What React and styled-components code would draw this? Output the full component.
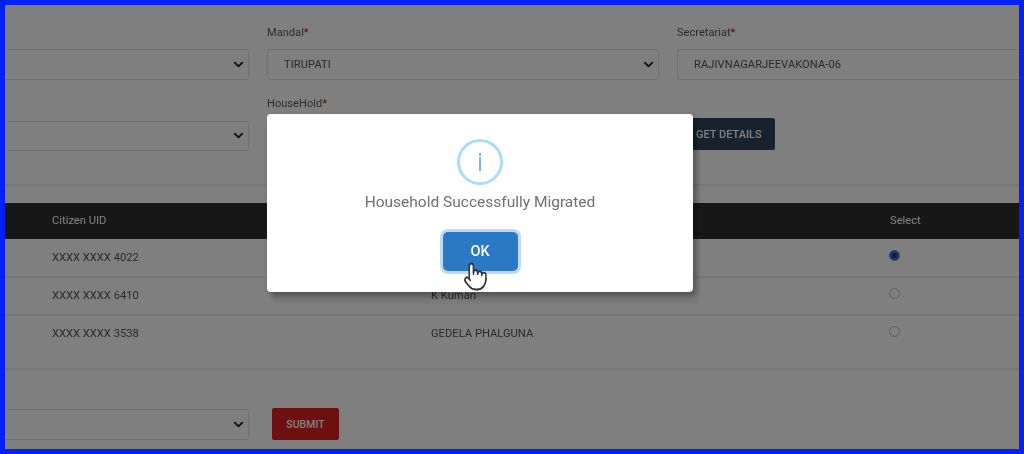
import React from "react";
import styled, { createGlobalStyle } from "styled-components";
import { ChevronDown, Pointer } from "lucide-react";

const Global = createGlobalStyle`
  html, body { margin: 0; padding: 0; background: #fff; }
  body { font-family: Roboto, "Liberation Sans", sans-serif; }
  * { box-sizing: border-box; }
`;

const Frame = styled.div`
  position: relative;
  width: 1024px;
  height: 454px;
  border: 5px solid #0320f5;
  background: #fff;
  overflow: hidden;
  color: #666;
  font-size: 12px;
`;

const PageBody = styled.div`
  filter: blur(0.35px);
`;

const FormGrid = styled.div`
  display: grid;
  grid-template-columns: 244px 392px 1fr;
  grid-template-rows: 54px 54px;
  column-gap: 18px;
  row-gap: 17px;
  padding-top: 21px;
  border-bottom: 2px solid #eee;
  height: 181px;
`;

const Field = styled.div`
  display: flex;
  flex-direction: column;
  min-width: 0;
`;

const Label = styled.label`
  height: ${p => p.$h || 23}px;
  line-height: 13px;
  font-size: 11.1px;
  color: #5a5a5a;
  ${p => p.$spacer && "visibility: hidden;"}
  &::after { content: "*"; color: #c01010; }
`;

const Select = styled.div`
  display: flex;
  align-items: center;
  justify-content: space-between;
  height: 31px;
  padding: 0 2px 0 16px;
  border: 1px solid #e2e2e2;
  border-radius: 3px;
  background: #fff;
  color: #555;
  font-size: 11.1px;
  letter-spacing: 0.1px;
  ${p => p.$clipRight && "border-right: none; border-radius: 3px 0 0 3px;"}
  ${p => p.$clipLeft && "border-left: none; border-radius: 0 3px 3px 0;"}
  svg { color: #222; }
`;

const DetailsButton = styled.button`
  width: 98px;
  height: 32px;
  padding: 0 0 0 19px;
  border: none;
  border-radius: 2px;
  background: #2e445f;
  color: #fff;
  font: 500 11px Roboto, sans-serif;
  text-align: left;
`;

const TableWrap = styled.div`
  margin-top: 17px;
`;

const Row = styled.div`
  display: grid;
  grid-template-columns: 47px 379px 459px 1fr;
  align-items: start;
  height: ${p => p.$h}px;
  padding-top: ${p => p.$top}px;
  border-bottom: 2px solid #eee;
  font-size: 11.2px;
  line-height: 16px;
  color: #555;
`;

const HeadRow = styled(Row)`
  background: #2f2f2f;
  color: #fff;
  border-bottom: none;
`;

const Radio = styled.span`
  display: block;
  width: 11px;
  height: 11px;
  margin-left: -1px;
  border-radius: 50%;
  border: 1.5px solid ${p => (p.$on ? "#5b8fdc" : "#bbb")};
  background: ${p => (p.$on ? "#103a80" : "#fff")};
  ${p => p.$on && "box-shadow: inset 0 0 0 2px #2a72e0;"}
`;

const Bottom = styled.div`
  display: grid;
  grid-template-columns: 244px auto;
  column-gap: 23px;
  margin-top: 39px;
  align-items: start;
  justify-content: start;
`;

const SubmitButton = styled.button`
  width: 67px;
  height: 32px;
  margin-top: -1px;
  border: none;
  border-radius: 2px;
  background: #dc2020;
  color: #fff;
  font: 500 10.5px Roboto, sans-serif;
`;

const Overlay = styled.div`
  position: absolute;
  inset: 0;
  background: rgba(0, 0, 0, 0.5);
`;

const Modal = styled.div`
  position: absolute;
  left: 262px;
  top: 109px;
  width: 426px;
  height: 178px;
  display: flex;
  flex-direction: column;
  align-items: center;
  padding-top: 25px;
  background: #fff;
  border-radius: 4px;
  box-shadow: 3px 4px 6px rgba(0, 0, 0, 0.35), 6px 12px 0 rgba(0, 0, 0, 0.04);
`;

const InfoIcon = styled.svg`
  width: 46px;
  height: 46px;
  display: block;
`;

const Message = styled.div`
  margin-top: 7px;
  font-size: 15.5px;
  line-height: 20px;
  color: #707070;
`;

const OkButton = styled.button`
  margin-top: 20px;
  width: 75px;
  height: 39px;
  border: none;
  border-radius: 5px;
  background: #2b78c5;
  color: #fff;
  font: 500 14.5px Roboto, sans-serif;
  box-shadow: 0 0 0 3px #bfdcee;
`;

const Cursor = styled.div`
  position: absolute;
  left: 458px;
  top: 256px;
  line-height: 0;
  color: #333;
`;

const rows = [
  { uid: "XXXX XXXX 4022", name: "", on: true, h: 39, top: 11 },
  { uid: "XXXX XXXX 6410", name: "K Kumari", on: false, h: 38, top: 10 },
  { uid: "XXXX XXXX 3538", name: "GEDELA PHALGUNA", on: false, h: 54, top: 10 },
];

const Chevron = () => <ChevronDown size={15} strokeWidth={3} />;

export default function App() {
  return (
    <Frame>
      <Global />
      <PageBody>
        <FormGrid>
          <Field>
            <Label as="div" $spacer>District</Label>
            <Select $clipLeft><span /><Chevron /></Select>
          </Field>
          <Field>
            <Label>Mandal</Label>
            <Select>TIRUPATI<Chevron /></Select>
          </Field>
          <Field>
            <Label>Secretariat</Label>
            <Select $clipRight>RAJIVNAGARJEEVAKONA-06</Select>
          </Field>
          <Field>
            <Label as="div" $spacer $h={24}>Cluster</Label>
            <Select $clipLeft><span /><Chevron /></Select>
          </Field>
          <Field>
            <Label $h={24}>HouseHold</Label>
          </Field>
          <Field>
            <Label as="div" $spacer $h={21}>Action</Label>
            <DetailsButton>GET DETAILS</DetailsButton>
          </Field>
        </FormGrid>
        <TableWrap>
          <HeadRow $h={36} $top={10}>
            <span />
            <span>Citizen UID</span>
            <span />
            <span>Select</span>
          </HeadRow>
          {rows.map(r => (
            <Row key={r.uid} $h={r.h} $top={r.top}>
              <span />
              <span>{r.uid}</span>
              <span>{r.name}</span>
              <Radio $on={r.on} />
            </Row>
          ))}
        </TableWrap>
        <Bottom>
          <Select $clipLeft><span /><Chevron /></Select>
          <SubmitButton>SUBMIT</SubmitButton>
        </Bottom>
      </PageBody>
      <Overlay />
      <Modal>
        <InfoIcon viewBox="0 0 46 46">
          <circle cx="23" cy="23" r="21.5" fill="none" stroke="#a9def5" strokeWidth="3" />
          <rect x="22" y="14" width="2" height="3" fill="#7db6e0" />
          <rect x="22" y="18" width="2" height="14" fill="#7db6e0" />
        </InfoIcon>
        <Message>Household Successfully Migrated</Message>
        <OkButton>OK</OkButton>
      </Modal>
      <Cursor>
        <Pointer width={25} height={31} preserveAspectRatio="none" fill="#fff" strokeWidth={1.5} />
      </Cursor>
    </Frame>
  );
}
